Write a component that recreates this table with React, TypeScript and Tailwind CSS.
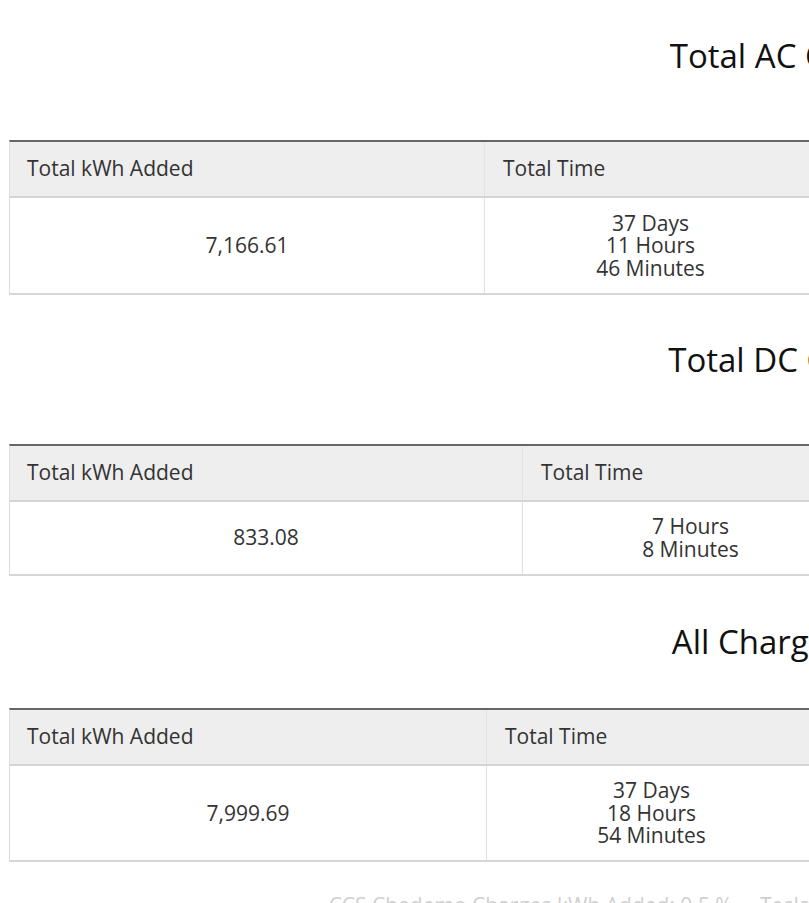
const sections = [
  {
    title: "Total AC Charging",
    head: "pt-[38px]",
    gap: "mt-[66px]",
    cols: "grid-cols-[475px_332px_1fr]",
    kwh: "7,166.61",
    time: ["37 Days", "11 Hours", "46 Minutes"],
    sessions: "1,204",
  },
  {
    title: "Total DC Charging",
    head: "mt-[47px]",
    gap: "mt-[66px]",
    cols: "grid-cols-[513px_336px_1fr]",
    kwh: "833.08",
    time: ["7 Hours", "8 Minutes"],
    sessions: "31",
  },
  {
    title: "All Charging Total",
    head: "mt-[48px]",
    gap: "mt-[48px]",
    cols: "grid-cols-[477px_330px_1fr]",
    kwh: "7,999.69",
    time: ["37 Days", "18 Hours", "54 Minutes"],
    sessions: "1,235",
  },
];

export default function App() {
  return (
    <div className="h-[903px] w-[809px] overflow-hidden bg-white font-['Open_Sans',sans-serif] text-[#333]">
      <div className="w-[1594px] ml-[9px]">
        {sections.map((s) => (
          <section key={s.title}>
            <h2 className={`${s.head} text-center text-[33px] leading-[36px] font-medium text-[#111]`}>
              {s.title}
            </h2>
            <div className={`${s.gap} border-t-2 border-b-2 border-l border-t-[#666] border-b-[#d6d6d6] border-l-[#dcdcdc] text-[21px]`}>
              <div className={`grid ${s.cols} h-[56px] items-center bg-[#eeeeee] border-b-2 border-[#d4d4d4]`}>
                <div className="h-full flex items-center px-[17px] border-r border-[#e4e4e4]">Total kWh Added</div>
                <div className="h-full flex items-center px-[18px] border-r border-[#e4e4e4]">Total Time</div>
                <div className="h-full flex items-center px-[18px]">Total Sessions</div>
              </div>
              <div className={`grid ${s.cols} leading-[22.5px]`}>
                <div className="flex items-center justify-center py-[13.5px] border-r border-[#e0e0e0]">{s.kwh}</div>
                <div className="flex flex-col items-center justify-center py-[13.5px] border-r border-[#e0e0e0]">
                  {s.time.map((t) => (
                    <span key={t}>{t}</span>
                  ))}
                </div>
                <div className="flex items-center justify-center py-[13.5px]">{s.sessions}</div>
              </div>
            </div>
          </section>
        ))}
        <p className="mt-[29px] text-center text-[21px] leading-[28px] text-[#cfcfcf]">
          CCS Chademo Charges kWh Added: 0.5 % &nbsp;·&nbsp; Tesla kWh Added: 10.4 % &nbsp;·&nbsp; Home kWh Added: 89.1 %
        </p>
      </div>
    </div>
  );
}
